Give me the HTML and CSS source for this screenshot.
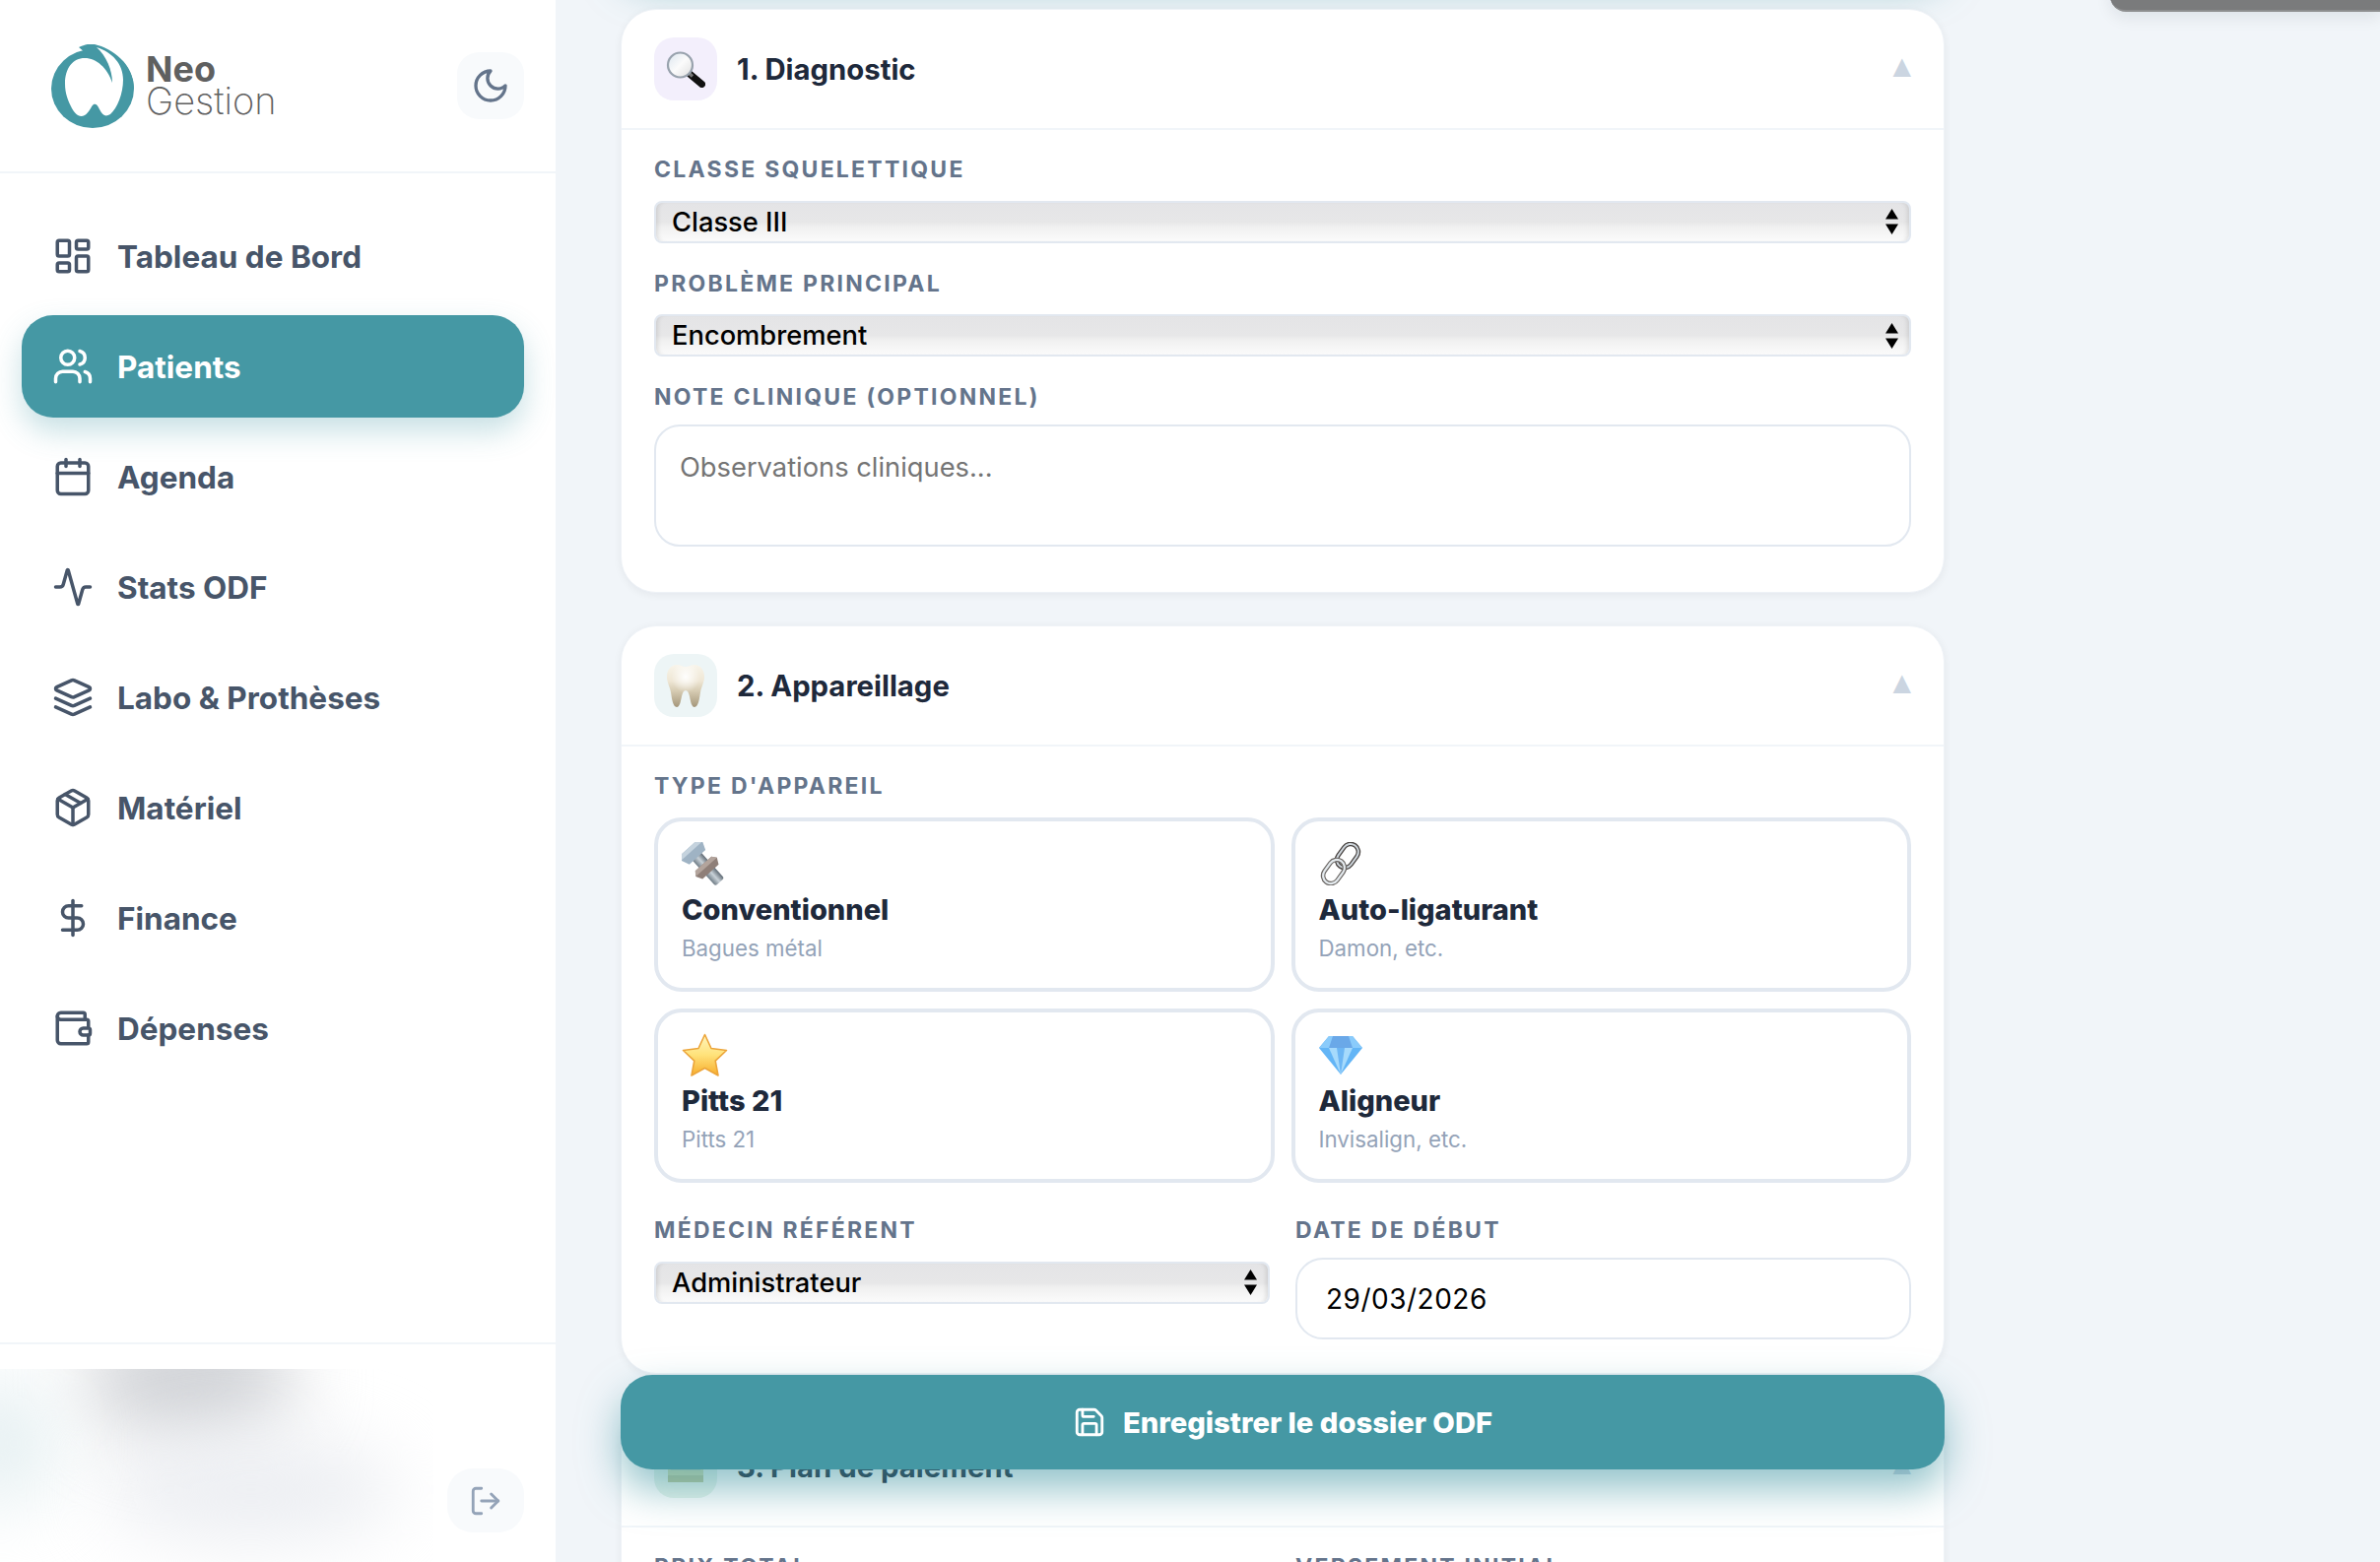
FILE: index.html
```html
<!DOCTYPE html>
<html lang="fr">
<head>
<meta charset="utf-8">
<title>Neo Gestion</title>
<link rel="stylesheet" href="styles.css">
</head>
<body>
<aside class="sidebar">
  <header class="brand">
    <svg class="logo" viewBox="0 0 84 85" aria-hidden="true">
      <ellipse cx="42" cy="45" rx="42" ry="40" fill="#4598a4"/>
      <path d="M28 3C34 0 40-1 44 0 62 4 84 20 84 45L60 30Z" fill="#4598a4"/>
      <path d="M14 40C14 24 22 14 34 14 46 14 57 24 62 39 62 26 56 12 46 3 62 8 73 20 73 36 73 50 67 65 60 71 55 74 52 72 49 66 47 61 45 60 43 61 41 62 38 70 34 72 28 75 24 70 21 65 17 57 14 50 14 40Z" fill="#fff"/>
    </svg>
    <div class="wordmark">
      <span class="word-neo">Neo</span>
      <span class="word-gestion">Gestion</span>
    </div>
    <button class="theme-btn" type="button" aria-label="Thème">
      <svg class="ico ico-moon" viewBox="0 0 24 24"><path d="M12 3a6 6 0 0 0 9 9 9 9 0 1 1-9-9Z"/></svg>
    </button>
  </header>

  <nav class="nav">
    <a class="nav-item"><svg class="ico" viewBox="0 0 24 24"><rect width="7" height="9" x="3" y="3" rx="1"/><rect width="7" height="5" x="14" y="3" rx="1"/><rect width="7" height="9" x="14" y="12" rx="1"/><rect width="7" height="5" x="3" y="16" rx="1"/></svg><span>Tableau de Bord</span></a>
    <a class="nav-item active"><svg class="ico" viewBox="0 0 24 24"><path d="M16 21v-2a4 4 0 0 0-4-4H6a4 4 0 0 0-4 4v2"/><circle cx="9" cy="7" r="4"/><path d="M22 21v-2a4 4 0 0 0-3-3.87"/><path d="M16 3.13a4 4 0 0 1 0 7.75"/></svg><span>Patients</span></a>
    <a class="nav-item"><svg class="ico" viewBox="0 0 24 24"><rect width="18" height="18" x="3" y="4" rx="2"/><path d="M16 2v4"/><path d="M8 2v4"/><path d="M3 10h18"/></svg><span>Agenda</span></a>
    <a class="nav-item"><svg class="ico" viewBox="0 0 24 24"><path d="M22 12h-2.48a2 2 0 0 0-1.93 1.46l-2.35 8.36a.25.25 0 0 1-.48 0L9.24 2.18a.25.25 0 0 0-.48 0l-2.35 8.36A2 2 0 0 1 4.49 12H2"/></svg><span>Stats ODF</span></a>
    <a class="nav-item"><svg class="ico" viewBox="0 0 24 24"><path d="M12.83 2.18a2 2 0 0 0-1.66 0L2.6 6.08a1 1 0 0 0 0 1.83l8.58 3.91a2 2 0 0 0 1.66 0l8.58-3.9a1 1 0 0 0 0-1.83Z"/><path d="m22 17.65-9.17 4.16a2 2 0 0 1-1.66 0L2 17.65"/><path d="m22 12.65-9.17 4.16a2 2 0 0 1-1.66 0L2 12.65"/></svg><span>Labo &amp; Prothèses</span></a>
    <a class="nav-item"><svg class="ico" viewBox="0 0 24 24"><path d="M11 21.73a2 2 0 0 0 2 0l7-4A2 2 0 0 0 21 16V8a2 2 0 0 0-1-1.73l-7-4a2 2 0 0 0-2 0l-7 4A2 2 0 0 0 3 8v8a2 2 0 0 0 1 1.73z"/><path d="M12 22V12"/><path d="m3.3 7 8.7 5 8.7-5"/><path d="m7.5 4.27 9 5.15"/></svg><span>Matériel</span></a>
    <a class="nav-item"><svg class="ico" viewBox="0 0 24 24"><path d="M12 2v20"/><path d="M17 5H9.5a3.5 3.5 0 0 0 0 7h5a3.5 3.5 0 0 1 0 7H6"/></svg><span>Finance</span></a>
    <a class="nav-item"><svg class="ico" viewBox="0 0 24 24"><path d="M19 7V4a1 1 0 0 0-1-1H5a2 2 0 0 0 0 4h15a1 1 0 0 1 1 1v4h-3a2 2 0 0 0 0 4h3a1 1 0 0 0 1-1v-2a1 1 0 0 0-1-1"/><path d="M3 5v14a2 2 0 0 0 2 2h15a1 1 0 0 0 1-1v-4"/></svg><span>Dépenses</span></a>
  </nav>

  <footer class="side-foot">
    <div class="user-blur" aria-hidden="true">
      <i class="blob blob-a"></i>
      <i class="blob blob-b"></i>
      <i class="blob blob-c"></i>
    </div>
    <button class="logout-btn" type="button" aria-label="Déconnexion">
      <svg class="ico ico-out" viewBox="0 0 24 24"><path d="M9 21H5a2 2 0 0 1-2-2V5a2 2 0 0 1 2-2h4"/><path d="m16 17 5-5-5-5"/><path d="M21 12H9"/></svg>
    </button>
  </footer>
</aside>

<main class="main">
  <div class="top-panel"></div>
  <div class="column">
    <div class="top-shade"></div>

    <section class="card">
      <div class="card-head">
        <div class="tile tile-violet">
          <svg class="emoji emoji-lens" viewBox="0 0 40 37" aria-hidden="true">
            <defs><linearGradient id="glass" x1="0" y1="0" x2="1" y2="1"><stop offset="0" stop-color="#dbe5ef"/><stop offset=".5" stop-color="#fbfbfb"/><stop offset="1" stop-color="#dedede"/></linearGradient></defs>
            <path d="M24 23 36.500 33.500" stroke="#111" stroke-width="7" stroke-linecap="round"/>
            <path d="M23 22 27 25.500" stroke="#777" stroke-width="3.500"/>
            <circle cx="14.500" cy="14" r="12.500" fill="url(#glass)" stroke="#98a2ad" stroke-width="2.200"/>
          </svg>
        </div>
        <h2 class="card-title">1. Diagnostic</h2>
        <span class="chev">▲</span>
      </div>
      <div class="card-body body-first">
        <label class="field-label">Classe squelettique</label>
        <select class="native-select"><option>Classe III</option></select>
        <label class="field-label label-next">Problème principal</label>
        <select class="native-select"><option>Encombrement</option></select>
        <label class="field-label label-next">Note clinique (optionnel)</label>
        <textarea class="note" placeholder="Observations cliniques..."></textarea>
      </div>
    </section>

    <section class="card">
      <div class="card-head">
        <div class="tile tile-teal">
          <svg class="emoji emoji-tooth" viewBox="0 0 38 44" aria-hidden="true">
            <defs>
              <linearGradient id="enamel" x1="0" y1="0" x2="0" y2="1"><stop offset="0" stop-color="#f8f4ea"/><stop offset=".38" stop-color="#efe7d5"/><stop offset=".62" stop-color="#d6cbb2"/><stop offset="1" stop-color="#a4967a"/></linearGradient>
              <radialGradient id="enamel-hi" cx=".5" cy=".28" r=".38"><stop offset="0" stop-color="#fff" stop-opacity=".95"/><stop offset="1" stop-color="#fff" stop-opacity="0"/></radialGradient>
            </defs>
            <path d="M10 1C4 1 0 6 0 13c0 6 3 10 4 16 1 6 2 15 6 15 3 0 4-6 5-11 1-4 2-6 4-6s3 2 4 6c1 5 2 11 5 11 4 0 5-9 6-15 1-6 4-10 4-16 0-7-4-12-10-12-4 0-6 2-9 2s-5-2-9-2Z" fill="url(#enamel)"/>
            <path d="M10 1C4 1 0 6 0 13c0 6 3 10 4 16 1 6 2 15 6 15 3 0 4-6 5-11 1-4 2-6 4-6s3 2 4 6c1 5 2 11 5 11 4 0 5-9 6-15 1-6 4-10 4-16 0-7-4-12-10-12-4 0-6 2-9 2s-5-2-9-2Z" fill="url(#enamel-hi)"/>
          </svg>
        </div>
        <h2 class="card-title">2. Appareillage</h2>
        <span class="chev">▲</span>
      </div>
      <div class="card-body">
        <label class="field-label">Type d'appareil</label>
        <div class="option-grid">
          <div class="option">
            <svg class="emoji-opt" viewBox="0 0 44 44" aria-hidden="true">
              <defs><linearGradient id="steel" x1="0" y1="0" x2="1" y2="0"><stop offset="0" stop-color="#6f7c86"/><stop offset=".5" stop-color="#c9d2d8"/><stop offset="1" stop-color="#5f6a74"/></linearGradient></defs>
              <g transform="rotate(-42 22 22)">
                <rect x="16" y="6" width="12" height="41" rx="2.500" fill="url(#steel)"/>
                <path d="M11 0h22l3.500 4.500L33 13H11L7.500 4.500Z" fill="#9fb3c4"/>
                <path d="M11 0h22l3.500 4.500h-29Z" fill="#c5d3de"/>
                <path d="M11 22h22l3.500 4.500L33 33H11l-3.500-6.500Z" fill="#8f7f78"/>
                <path d="M11 22h22l3.500 4.500h-29Z" fill="#b3a49c"/>
              </g>
            </svg>
            <strong class="opt-title">Conventionnel</strong>
            <span class="opt-sub">Bagues métal</span>
          </div>
          <div class="option">
            <svg class="emoji-opt" viewBox="0 0 44 44" aria-hidden="true">
              <g fill="none">
                <rect x="21" y="1" width="16" height="26" rx="8" transform="rotate(36 29 14)" stroke="#4b4644" stroke-width="4.600"/>
                <rect x="21" y="1" width="16" height="26" rx="8" transform="rotate(36 29 14)" stroke="#cfd7dd" stroke-width="2"/>
                <rect x="7" y="17" width="16" height="26" rx="8" transform="rotate(36 15 30)" stroke="#6a6663" stroke-width="4.600"/>
                <rect x="7" y="17" width="16" height="26" rx="8" transform="rotate(36 15 30)" stroke="#e4eaee" stroke-width="2.200"/>
              </g>
            </svg>
            <strong class="opt-title">Auto-ligaturant</strong>
            <span class="opt-sub">Damon, etc.</span>
          </div>
          <div class="option">
            <svg class="emoji-opt emoji-star" viewBox="0 0 47 44" aria-hidden="true">
              <defs><linearGradient id="gold" x1="0" y1="0" x2="0" y2="1"><stop offset="0" stop-color="#fff6bd"/><stop offset=".5" stop-color="#ffe27a"/><stop offset="1" stop-color="#f7ad2c"/></linearGradient></defs>
              <path d="M23.500 1.500 30 15.500l15.500 2-11.300 10.700L37 43 23.500 35.500 10 43l2.800-14.800L1.500 17.500l15.500-2Z" fill="url(#gold)" stroke="#eca53a" stroke-width="1.600" stroke-linejoin="round"/>
            </svg>
            <strong class="opt-title">Pitts 21</strong>
            <span class="opt-sub">Pitts 21</span>
          </div>
          <div class="option">
            <svg class="emoji-opt" viewBox="0 0 44 44" aria-hidden="true">
              <path d="M10 3h24l10 12-22 27L0 15Z" fill="#63b5f6"/>
              <path d="M10 3h24l10 12H0Z" fill="#8acbfb"/>
              <path d="M14 3h16l4 12H10Z" fill="#6aa8e8"/>
              <path d="M10 15h24L22 42Z" fill="#a6dafc"/>
              <path d="M18 15h8l-4 27Z" fill="#6db6f4"/>
            </svg>
            <strong class="opt-title">Aligneur</strong>
            <span class="opt-sub">Invisalign, etc.</span>
          </div>
        </div>
        <div class="form-row">
          <div>
            <label class="field-label">Médecin référent</label>
            <select class="native-select"><option>Administrateur</option></select>
          </div>
          <div>
            <label class="field-label">Date de début</label>
            <input class="date-input" type="text" value="29/03/2026">
          </div>
        </div>
      </div>
    </section>

    <section class="card">
      <div class="card-head">
        <div class="tile tile-green">
          <svg class="emoji emoji-pay" viewBox="0 0 38 36" aria-hidden="true">
            <rect x="1" y="1" width="36" height="32" rx="2" fill="#cfdcae"/>
            <path d="M4 6h30M4 14h22M4 20h30" stroke="#7aa3c2" stroke-width="2.400"/>
            <rect x="1" y="27" width="36" height="7" fill="#b9c79a"/>
          </svg>
        </div>
        <h2 class="card-title">3. Plan de paiement</h2>
        <span class="chev">▲</span>
      </div>
      <div class="card-body">
        <div class="form-row">
          <div><label class="field-label">Prix total</label></div>
          <div><label class="field-label">Versement initial</label></div>
        </div>
      </div>
    </section>

    <button class="save-btn" type="button">
      <svg class="ico ico-save" viewBox="0 0 24 24"><path d="M15.200 3a2 2 0 0 1 1.400.6l3.800 3.800a2 2 0 0 1 .6 1.400V19a2 2 0 0 1-2 2H5a2 2 0 0 1-2-2V5a2 2 0 0 1 2-2z"/><path d="M17 21v-7a1 1 0 0 0-1-1H8a1 1 0 0 0-1 1v7"/><path d="M7 3v4a1 1 0 0 0 1 1h7"/></svg>
      <span>Enregistrer le dossier ODF</span>
    </button>
  </div>
</main>
</body>
</html>
```

FILE: styles.css
```css
* { box-sizing: border-box; }

html, body {
  margin: 0;
  height: 1586px;
  overflow: hidden;
}

body {
  display: flex;
  background: #f1f5f9;
  font-family: "Inter", "Liberation Sans", sans-serif;
  color: #1e293b;
}

.ico {
  fill: none;
  stroke: currentColor;
  stroke-width: 2;
  stroke-linecap: round;
  stroke-linejoin: round;
  flex: none;
}

/* Sidebar */
.sidebar {
  width: 564px;
  height: 1586px;
  flex: none;
  display: flex;
  flex-direction: column;
  background: #fff;
}

.brand {
  height: 176px;
  flex: none;
  display: flex;
  align-items: center;
  padding: 0 32px 0 52px;
  border-bottom: 2px solid #f1f5f9;
}

.logo {
  width: 84px;
  height: 85px;
  flex: none;
}

.wordmark {
  margin-left: 12px;
  display: flex;
  flex-direction: column;
  color: #5f6060;
}

.word-neo {
  font-size: 36px;
  font-weight: 700;
  line-height: 31px;
}

.word-gestion {
  font-size: 38px;
  font-weight: 200;
  line-height: 33px;
}

.theme-btn {
  margin-left: auto;
  width: 68px;
  height: 68px;
  border: 0;
  border-radius: 22px;
  background: #f8fafc;
  color: #64748b;
  display: flex;
  align-items: center;
  justify-content: center;
  padding: 0;
}

.ico-moon { width: 40px; height: 40px; }

.nav {
  flex: 1;
  display: flex;
  flex-direction: column;
  gap: 8px;
  padding: 32px 32px 0 22px;
}

.nav-item {
  height: 104px;
  display: flex;
  align-items: center;
  gap: 24px;
  padding-left: 31px;
  border-radius: 32px;
  color: #475569;
  font-size: 31.500px;
  font-weight: 700;
}

.nav-item .ico { width: 42px; height: 42px; }

.nav-item.active {
  background: #4598a4;
  color: #fff;
  box-shadow: 0 14px 30px rgba(69, 152, 164, .3);
}

.side-foot {
  height: 223px;
  flex: none;
  display: flex;
  border-top: 2px solid #f1f5f9;
  padding: 25px 32px 30px 0;
}

.user-blur {
  position: relative;
  flex: 1;
  height: 198px;
  overflow: hidden;
}

.blob {
  position: absolute;
  display: block;
  border-radius: 50%;
  filter: blur(36px);
}

.blob-a { left: 85px; top: -55px; width: 215px; height: 130px; background: #d2d4d8; }
.blob-b { left: 105px; top: 70px; width: 300px; height: 105px; background: #eceef2; }
.blob-c { left: -60px; top: 10px; width: 120px; height: 130px; background: #e6f0f2; }

.logout-btn {
  align-self: flex-end;
  margin-left: 14px;
  width: 78px;
  height: 65px;
  flex: none;
  border: 0;
  border-radius: 26px;
  background: #f8fafc;
  color: #94a3b8;
  display: flex;
  align-items: center;
  justify-content: center;
  padding: 0;
}

.ico-out { width: 34px; height: 34px; }

/* Main */
.main {
  position: relative;
  flex: 1;
  height: 1586px;
  overflow: hidden;
  padding: 9px 0 0 66px;
}

.top-panel {
  position: absolute;
  right: 0;
  top: -30px;
  width: 274px;
  height: 42px;
  background: #7a7b7c;
  border-bottom: 2px solid #8d8e8f;
  border-bottom-left-radius: 16px;
  box-shadow: 0 6px 16px rgba(15, 23, 42, .08);
}

.column {
  position: relative;
  width: 1344px;
}

.top-shade {
  position: absolute;
  left: 0;
  right: 0;
  top: -140px;
  height: 96px;
  border-radius: 32px;
  box-shadow: 0 20px 40px rgba(69, 152, 164, .58);
}

.card {
  position: relative;
  margin-bottom: 33px;
  background: #fff;
  border: 1px solid #eef2f7;
  border-radius: 36px;
  box-shadow: 0 2px 8px rgba(15, 23, 42, .06);
}

.card-head {
  height: 122px;
  display: flex;
  align-items: center;
  gap: 20px;
  padding: 0 33px;
  border-bottom: 2px solid #f1f5f9;
}

.tile {
  width: 64px;
  height: 64px;
  flex: none;
  border-radius: 20px;
  display: flex;
  align-items: center;
  justify-content: center;
}

.tile-violet { background: #f3effc; }
.tile-teal { background: #edf5f6; }
.tile-green { background: #e6f4ec; }

.emoji-lens { width: 40px; height: 37px; }
.emoji-tooth { width: 38px; height: 44px; }
.emoji-pay { width: 38px; height: 36px; }

.card-title {
  margin: 0;
  font-size: 29.300px;
  font-weight: 700;
  color: #1e293b;
}

.chev {
  margin-left: auto;
  margin-right: 0;
  margin-bottom: 6px;
  font-family: "DejaVu Sans", sans-serif;
  font-size: 24px;
  line-height: 1;
  color: #cbd5e1;
}

.card-body {
  padding: 26px 33px 34px;
}

.body-first { padding-bottom: 46px; }

.field-label {
  display: block;
  height: 28px;
  margin-bottom: 14px;
  font-size: 23px;
  line-height: 28px;
  font-weight: 700;
  letter-spacing: 2.250px;
  text-transform: uppercase;
  color: #64748b;
}

.label-next { margin-top: 27px; }

.native-select {
  display: block;
  width: 100%;
  height: 43px;
  margin-top: 17.500px;
  padding: 0 40px 0 16px;
  appearance: none;
  -webkit-appearance: none;
  border: 2px solid #e2e8f0;
  border-radius: 8px;
  font-family: "Inter", "Liberation Sans", sans-serif;
  font-size: 27.300px;
  font-weight: 500;
  color: #000;
  background-color: #eee;
  background-image:
    url("data:image/svg+xml,%3Csvg xmlns='http://www.w3.org/2000/svg' width='13' height='26'%3E%3Cpath d='M6.500 0 13 10.500H0ZM6.500 26 0 15.500h13Z' fill='%23000'/%3E%3C/svg%3E"),
    linear-gradient(#e4e4e6 0, #e7e7e8 50%, #f0f0f0 62%, #fbfbfb 100%);
  background-repeat: no-repeat;
  background-position: right 11px center, 0 0;
  box-shadow: inset 5px 0 4px -3px rgba(0, 0, 0, .1), inset -5px 0 4px -3px rgba(0, 0, 0, .1);
}

.note {
  display: block;
  width: 100%;
  height: 124px;
  padding: 24px;
  resize: none;
  outline: 0;
  border: 2px solid #e2e8f0;
  border-radius: 26px;
  font-family: "Inter", "Liberation Sans", sans-serif;
  font-size: 27.300px;
  line-height: 36px;
  color: #000;
  background: #fff;
}

.note::placeholder { color: #757575; opacity: 1; }

.option-grid {
  display: grid;
  grid-template-columns: 1fr 1fr;
  gap: 17px;
  margin-top: 18px;
}

.option {
  height: 177px;
  padding: 21px 24px;
  border: 4px solid #e2e8f0;
  border-radius: 28px;
  background: #fff;
  display: flex;
  flex-direction: column;
  align-items: flex-start;
}

.emoji-opt {
  width: 44px;
  height: 44px;
  flex: none;
  margin-bottom: 7px;
}

.emoji-star { width: 47px; }

.opt-title {
  font-size: 29px;
  line-height: 36px;
  font-weight: 800;
  color: #1e293b;
}

.opt-sub {
  margin-top: 8px;
  font-size: 22.300px;
  line-height: 26px;
  color: #94a3b8;
}

.form-row {
  display: grid;
  grid-template-columns: 1fr 1fr;
  column-gap: 26px;
  margin-top: 34px;
}

.card-body > .form-row:first-child { margin-top: 0; }

.date-input {
  display: block;
  width: 100%;
  height: 83px;
  padding: 0 29px;
  outline: 0;
  border: 2px solid #e2e8f0;
  border-radius: 28px;
  background: #fff;
  font-family: "Inter", "Liberation Sans", sans-serif;
  font-size: 28px;
  letter-spacing: .5px;
  color: #000;
}

.save-btn {
  position: absolute;
  left: 0;
  right: 0;
  top: 1387px;
  height: 96px;
  display: flex;
  align-items: center;
  justify-content: center;
  gap: 17px;
  border: 0;
  border-radius: 32px;
  background: #4598a4;
  color: #fff;
  font-family: "Inter", "Liberation Sans", sans-serif;
  font-size: 29.200px;
  font-weight: 800;
  box-shadow: 0 20px 40px rgba(69, 152, 164, .58);
}

.ico-save { width: 34px; height: 34px; }
```
